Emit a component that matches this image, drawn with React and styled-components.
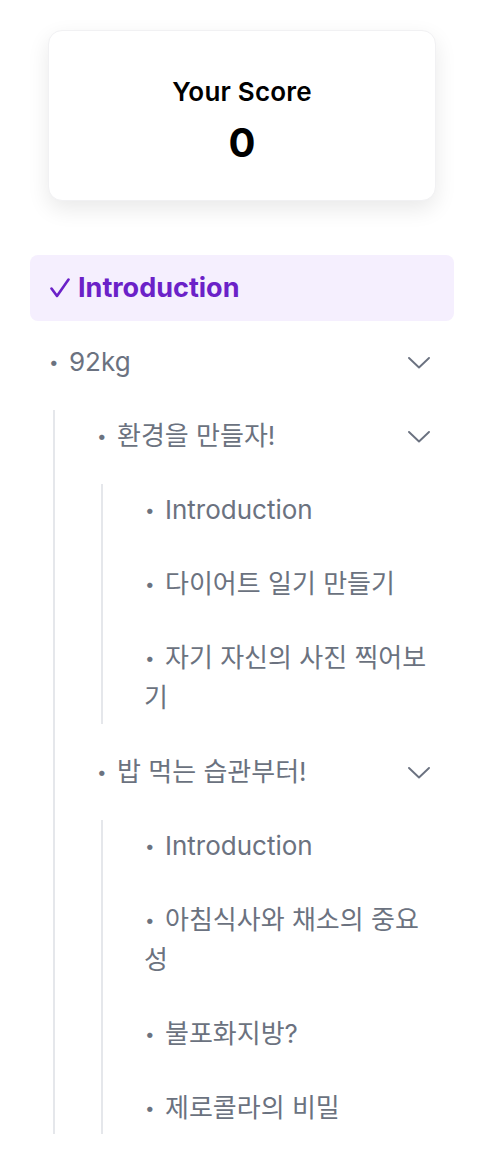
import styled, { createGlobalStyle } from "styled-components";

const GlobalStyle = createGlobalStyle`
    html, body {
        margin: 0;
        padding: 0;
        background: #ffffff;
    }
    body {
        font-family: Inter, "Noto Sans CJK KR", sans-serif;
    }
`;

const Page = styled.div`
    display: flex;
    flex-direction: column;
    padding: 30px 32px 0 30px;
    width: 486px;
    box-sizing: border-box;
`;

const ScoreCard = styled.div`
    display: flex;
    flex-direction: column;
    align-items: center;
    justify-content: center;
    margin: 0 18px;
    height: 171px;
    padding-top: 12px;
    box-sizing: border-box;
    border: 1px solid #f1f1f3;
    border-radius: 14px;
    background: #fff;
    box-shadow: 0 8px 22px rgba(0, 0, 0, 0.09);
    color: #000;
`;

const ScoreTitle = styled.div`
    font-size: 26px;
    font-weight: 600;
    line-height: 32px;
    letter-spacing: 0.2px;
`;

const ScoreValue = styled.div`
    font-size: 40px;
    font-weight: 700;
    line-height: 48px;
    margin-top: 11px;
`;

const List = styled.div`
    display: flex;
    flex-direction: column;
    gap: 8px;
    margin-top: ${props => props.$top ? '54px' : '0'};
`;

const SubList = styled(List)`
    position: relative;
    margin-left: 23px;
    padding-left: 25px;
    &::before {
        content: "";
        position: absolute;
        left: 0;
        top: 7px;
        bottom: 7px;
        width: 2px;
        background: #e5e7eb;
    }
`;

const Row = styled.div`
    display: flex;
    align-items: flex-start;
    justify-content: space-between;
    padding: 13px 24px 13px 18px;
    border-radius: 8px;
    font-size: ${props => props.$active ? '27px' : '26px'};
    line-height: 40px;
    font-weight: ${props => props.$active ? 700 : 400};
    color: ${props => props.$active ? '#6b21c8' : '#6b7280'};
    background: ${props => props.$active ? '#f5effe' : 'transparent'};
`;

const Label = styled.span`
    flex: 1;
    min-width: 0;
`;

const Bullet = styled.span`
    display: inline-block;
    width: 20px;
    font-size: 17px;
    line-height: 1;
    vertical-align: 3px;
    padding-left: 1px;
`;

const Check = styled.svg`
    display: inline-block;
    margin: 0 8px 0 2px;
    vertical-align: -1px;
`;

const Chevron = styled.svg`
    flex: none;
    margin-top: 15px;
`;

const CheckMark = () => (
    <Check width="20" height="20" viewBox="0 0 20 20" fill="none">
        <polyline points="1.5,10.5 7,18 18.5,1.5" stroke="#6b21c8" strokeWidth="2.6" strokeLinecap="round" strokeLinejoin="round" />
    </Check>
);

const ChevronDown = () => (
    <Chevron width="22" height="12" viewBox="0 0 22 12" fill="none">
        <polyline points="1,1 11,10.5 21,1" stroke="#6b7280" strokeWidth="1.9" strokeLinecap="round" strokeLinejoin="round" />
    </Chevron>
);

const menu = [
    {
        title: "92kg",
        children: [
            {
                title: "환경을 만들자!",
                children: [
                    { title: "Introduction" },
                    { title: "다이어트 일기 만들기" },
                    { title: "자기 자신의 사진 찍어보기" },
                ],
            },
            {
                title: "밥 먹는 습관부터!",
                children: [
                    { title: "Introduction" },
                    { title: "아침식사와 채소의 중요성" },
                    { title: "불포화지방?" },
                    { title: "제로콜라의 비밀" },
                ],
            },
        ],
    },
];

const MenuNode = ({ item }) => {
    const label = (
        <Label>
            <Bullet>•</Bullet>
            {item.title}
        </Label>
    );
    if (!item.children) {
        return <Row>{label}</Row>;
    }
    return (
        <>
            <Row>
                {label}
                <ChevronDown />
            </Row>
            <SubList>
                {item.children.map((child, index) => (
                    <MenuNode key={`${index}-${child.title}`} item={child} />
                ))}
            </SubList>
        </>
    );
};

const App = () => {
    return (
        <Page>
            <GlobalStyle />
            <ScoreCard>
                <ScoreTitle>Your Score</ScoreTitle>
                <ScoreValue>0</ScoreValue>
            </ScoreCard>
            <List $top>
                <Row $active>
                    <Label>
                        <CheckMark />
                        Introduction
                    </Label>
                </Row>
                {menu.map((item, index) => (
                    <MenuNode key={`${index}-top`} item={item} />
                ))}
            </List>
        </Page>
    );
};

export default App;
